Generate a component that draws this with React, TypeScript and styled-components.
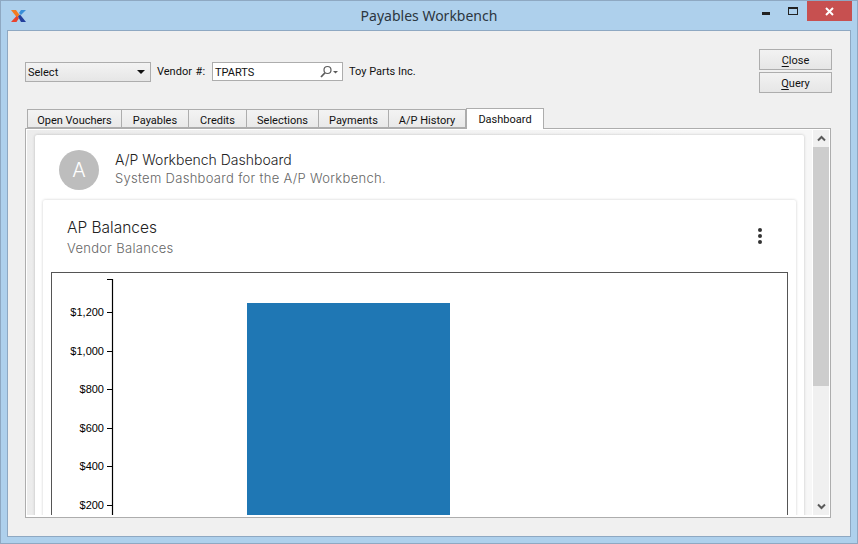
import React from "react";
import styled, { createGlobalStyle } from "styled-components";

const titleFont = `"Noto Sans", "Open Sans", sans-serif`;
const uiFont = `Roboto, "Noto Sans", sans-serif`;
const webFont = `Inter, "Liberation Sans", Arial, sans-serif`;
const chartFont = `"Liberation Sans", Arial, sans-serif`;

const tabs = [
  { label: "Open Vouchers", width: 95 },
  { label: "Payables", width: 67 },
  { label: "Credits", width: 58 },
  { label: "Selections", width: 72 },
  { label: "Payments", width: 70 },
  { label: "A/P History", width: 77 },
  { label: "Dashboard", width: 78, active: true },
];

const ticks = [
  { label: "$1,200", y: 39 },
  { label: "$1,000", y: 78 },
  { label: "$800", y: 116 },
  { label: "$600", y: 155 },
  { label: "$400", y: 193 },
  { label: "$200", y: 232 },
];

const Logo = () => (
  <svg width="17" height="14" viewBox="0 0 17 14">
    <path d="M1 1h5l3.5 5-2.500 2.500z" fill="#f47b20" />
    <path d="M1 13l5.500-6 2.500 2-2.500 4z" fill="#e8432e" />
    <path d="M11 1h5l-5 5-2-2z" fill="#3a8fd8" />
    <path d="M8 7.500l2-2 6 7.500h-5z" fill="#233f9c" />
  </svg>
);

const SearchIcon = () => (
  <svg width="20" height="14" viewBox="0 0 20 14">
    <circle cx="8.500" cy="5" r="3.500" fill="none" stroke="#5c5c5c" strokeWidth="1.200" />
    <path d="M5.800 8L2 12" stroke="#5c5c5c" strokeWidth="1.800" />
    <path d="M14 6h5l-2.500 2.500z" fill="#5c5c5c" />
  </svg>
);

const Chevron = ({ down }: { down?: boolean }) => (
  <svg width="9" height="7" viewBox="0 0 9 7">
    <path
      d={down ? "M1 1.500l3.500 3.500 3.500-3.500" : "M1 5.500l3.500-3.500 3.500 3.500"}
      fill="none"
      stroke="#5a5a5a"
      strokeWidth="2"
    />
  </svg>
);

const Chart = () => (
  <ChartSvg viewBox="0 0 735 243" width="735" height="243">
    <path d="M60.500 6v237" stroke="#000" strokeWidth="1.200" fill="none" />
    <path d="M55 6.500h6" stroke="#000" strokeWidth="1" />
    {ticks.map((tick) => (
      <g key={tick.label}>
        <path d={`M55 ${tick.y + 0.5}h6`} stroke="#000" strokeWidth="1" />
        <text x="52" y={tick.y + 4} textAnchor="end" fontSize="11" fontFamily={chartFont} fill="#000">
          {tick.label}
        </text>
      </g>
    ))}
    <rect x="195" y="30" width="203" height="213" fill="#1f77b4" />
  </ChartSvg>
);

export default function App() {
  return (
    <>
      <GlobalStyle />
      <Window>
        <TitleBar>
          <LogoSlot>
            <Logo />
          </LogoSlot>
          <Title>Payables Workbench</Title>
          <Controls>
            <WindowButton>
              <MinGlyph />
            </WindowButton>
            <WindowButton>
              <MaxGlyph />
            </WindowButton>
            <CloseButton>
              <svg width="9" height="9" viewBox="0 0 9 9">
                <path d="M1 1l7 7M8 1l-7 7" stroke="#fff" strokeWidth="2" />
              </svg>
            </CloseButton>
          </Controls>
        </TitleBar>
        <Client>
          <Header>
            <Filters>
              <Combo>
                <ComboText>Select</ComboText>
                <ComboArrow />
              </Combo>
              <FieldLabel>Vendor #:</FieldLabel>
              <Lookup>
                TPARTS
                <SearchIcon />
              </Lookup>
              <VendorName>Toy Parts Inc.</VendorName>
            </Filters>
            <Actions>
              <PushButton>
                <u>C</u>lose
              </PushButton>
              <PushButton>
                <u>Q</u>uery
              </PushButton>
            </Actions>
          </Header>
          <TabBar>
            {tabs.map((tab) => (
              <Tab key={tab.label} $active={tab.active} $width={tab.width}>
                {tab.label}
              </Tab>
            ))}
          </TabBar>
          <Pane>
            <Viewport>
              <OuterCard>
                <DashHeader>
                  <Avatar>A</Avatar>
                  <div>
                    <DashTitle>A/P Workbench Dashboard</DashTitle>
                    <DashSub>System Dashboard for the A/P Workbench.</DashSub>
                  </div>
                </DashHeader>
                <InnerCard>
                  <CardHeader>
                    <div>
                      <CardTitle>AP Balances</CardTitle>
                      <CardSub>Vendor Balances</CardSub>
                    </div>
                    <Kebab>
                      <Dot />
                      <Dot />
                      <Dot />
                    </Kebab>
                  </CardHeader>
                  <ChartFrame>
                    <Chart />
                  </ChartFrame>
                </InnerCard>
              </OuterCard>
            </Viewport>
            <ScrollBar>
              <ScrollEnd>
                <Chevron />
              </ScrollEnd>
              <ScrollTrack>
                <ScrollThumb />
              </ScrollTrack>
              <ScrollEnd>
                <Chevron down />
              </ScrollEnd>
            </ScrollBar>
          </Pane>
        </Client>
      </Window>
    </>
  );
}

const GlobalStyle = createGlobalStyle`
  html, body {
    margin: 0;
    padding: 0;
    overflow: hidden;
  }
  * {
    box-sizing: border-box;
  }
`;

const Window = styled.div`
  width: 858px;
  height: 544px;
  background: #aed0ec;
  border: 1px solid #8ea8c2;
  display: flex;
  flex-direction: column;
  overflow: hidden;
  font-family: ${uiFont};
`;

const TitleBar = styled.div`
  height: 29px;
  flex: none;
  display: grid;
  grid-template-columns: 1fr auto 1fr;
  align-items: center;
`;

const LogoSlot = styled.div`
  display: flex;
  padding: 1px 0 0 9px;
`;

const Title = styled.div`
  font-family: ${titleFont};
  font-size: 14px;
  color: #2c3640;
`;

const Controls = styled.div`
  display: flex;
  justify-content: flex-end;
  align-self: start;
`;

const WindowButton = styled.div`
  width: 27px;
  height: 20px;
  display: flex;
  align-items: flex-end;
  justify-content: center;
  padding: 0 2px 6px 0;
`;

const MinGlyph = styled.div`
  width: 8px;
  height: 3px;
  background: #222;
`;

const MaxGlyph = styled.div`
  width: 10px;
  height: 8px;
  border: 1px solid #222;
  border-top-width: 2px;
`;

const CloseButton = styled.div`
  width: 45px;
  height: 20px;
  margin-right: 5px;
  background: #c75050;
  display: flex;
  align-items: center;
  justify-content: center;
`;

const Client = styled.div`
  margin: 0 6px 6px 6px;
  flex: 1;
  min-height: 0;
  background: #f0f0f0;
  border: 1px solid #8ea8c2;
  padding: 18px 18px 18px 17px;
  display: flex;
  flex-direction: column;
`;

const Header = styled.div`
  height: 44px;
  flex: none;
  display: flex;
  justify-content: space-between;
  align-items: center;
`;

const Filters = styled.div`
  display: flex;
  align-items: center;
  font-size: 11px;
  color: #111;
  padding-top: 1px;
`;

const Combo = styled.div`
  width: 126px;
  height: 20px;
  border: 1px solid #adadad;
  background: linear-gradient(#f3f3f3, #e6e6e6);
  display: flex;
  align-items: center;
  justify-content: space-between;
  padding: 0 5px 0 2px;
`;

const ComboText = styled.span`
  padding-top: 2px;
`;

const ComboArrow = styled.div`
  width: 0;
  height: 0;
  border-left: 4px solid transparent;
  border-right: 4px solid transparent;
  border-top: 4px solid #111;
`;

const FieldLabel = styled.div`
  margin-left: 6px;
  width: 55px;
  word-spacing: 1px;
`;

const Lookup = styled.div`
  width: 131px;
  height: 19px;
  background: #fff;
  border: 1px solid #adadad;
  display: flex;
  align-items: center;
  justify-content: space-between;
  padding: 1px 3px 0 2px;
`;

const VendorName = styled.div`
  margin-left: 6px;
`;

const Actions = styled.div`
  display: flex;
  flex-direction: column;
  gap: 2px;
`;

const PushButton = styled.div`
  width: 73px;
  height: 21px;
  border: 1px solid #adadad;
  background: linear-gradient(#f2f2f2, #e6e6e6);
  font-size: 11px;
  color: #111;
  padding-top: 1px;
  display: flex;
  align-items: center;
  justify-content: center;
  u {
    text-underline-offset: 2px;
  }
`;

const TabBar = styled.div`
  margin-top: 15px;
  height: 20px;
  padding-left: 2px;
  display: flex;
  align-items: flex-end;
  flex: none;
  position: relative;
  z-index: 1;
`;

const Tab = styled.div<{ $active?: boolean; $width: number }>`
  width: ${(p) => p.$width}px;
  height: ${(p) => (p.$active ? 21 : 19)}px;
  margin-bottom: ${(p) => (p.$active ? -1 : 0)}px;
  border: 1px solid #adadad;
  border-left-width: ${(p) => (p.$active ? 1 : 0)}px;
  border-bottom-width: ${(p) => (p.$active ? 0 : 1)}px;
  &:first-child {
    border-left-width: 1px;
  }
  background: ${(p) => (p.$active ? "#fff" : "linear-gradient(#f3f3f3, #e9e9e9)")};
  font-size: 11px;
  color: #111;
  padding-top: ${(p) => (p.$active ? 1 : 3)}px;
  display: flex;
  align-items: center;
  justify-content: center;
`;

const Pane = styled.div`
  width: 806px;
  height: 390px;
  flex: none;
  border: 1px solid #adadad;
  background: #fff;
  display: flex;
  padding: 1px 1px 2px 1px;
`;

const Viewport = styled.div`
  width: 786px;
  height: 100%;
  overflow: hidden;
  padding: 5px 8px 0 8px;
  background: linear-gradient(90deg, #ececec, #f7f7f7 85%);
`;

const OuterCard = styled.div`
  height: 500px;
  background: #fff;
  border-radius: 2px;
  box-shadow: 0 0 3px rgba(0, 0, 0, 0.22);
  padding: 0 8px;
`;

const DashHeader = styled.div`
  height: 65px;
  display: flex;
  align-items: flex-start;
  padding: 15px 0 0 16px;
  gap: 16px;
  font-family: ${webFont};
  font-weight: 300;
`;

const Avatar = styled.div`
  width: 40px;
  height: 40px;
  border-radius: 50%;
  background: #bdbdbd;
  color: #fff;
  font-size: 20px;
  display: flex;
  align-items: center;
  justify-content: center;
`;

const DashTitle = styled.div`
  font-size: 14px;
  line-height: 20px;
  color: #222;
`;

const DashSub = styled.div`
  font-size: 13px;
  line-height: 17px;
  letter-spacing: 0.3px;
  color: #666;
`;

const InnerCard = styled.div`
  height: 400px;
  background: #fff;
  border-radius: 2px;
  box-shadow: 0 0 3px rgba(0, 0, 0, 0.2);
  padding: 0 8px;
  font-family: ${webFont};
  font-weight: 300;
`;

const CardHeader = styled.div`
  height: 72px;
  display: flex;
  justify-content: space-between;
  padding: 18px 0 0 16px;
`;

const CardTitle = styled.div`
  font-size: 15.500px;
  line-height: 20px;
  color: #222;
`;

const CardSub = styled.div`
  font-size: 13px;
  line-height: 20px;
  letter-spacing: 0.3px;
  color: #666;
`;

const Kebab = styled.div`
  display: flex;
  flex-direction: column;
  gap: 2px;
  padding: 10px 26px 0 0;
`;

const Dot = styled.div`
  width: 4px;
  height: 4px;
  border-radius: 50%;
  background: #333;
`;

const ChartFrame = styled.div`
  width: 737px;
  border: 1px solid #555;
  background: #fff;
  height: 320px;
`;

const ChartSvg = styled.svg`
  display: block;
`;

const ScrollBar = styled.div`
  width: 16px;
  margin-left: 1px;
  display: flex;
  flex-direction: column;
  background: #f0f0f0;
`;

const ScrollEnd = styled.div`
  height: 17px;
  flex: none;
  display: flex;
  align-items: center;
  justify-content: center;
`;

const ScrollTrack = styled.div`
  flex: 1;
`;

const ScrollThumb = styled.div`
  height: 239px;
  background: #cdcdcd;
`;
